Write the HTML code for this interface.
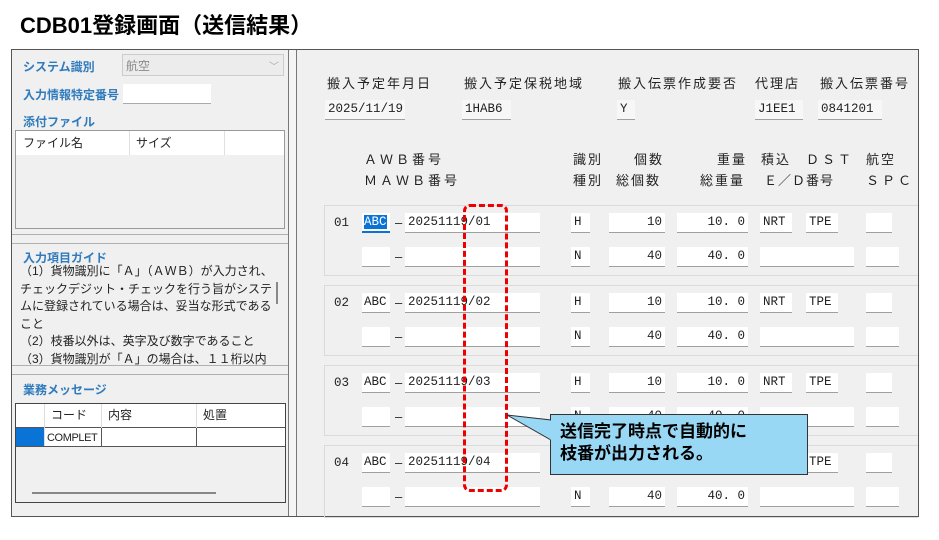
<!DOCTYPE html>
<html><head><meta charset="utf-8">
<style>
*{margin:0;padding:0;box-sizing:border-box}
body{width:939px;height:540px;background:#fff;position:relative;overflow:hidden;font-family:"Liberation Sans","Noto Sans CJK JP",sans-serif;color:#222}
.a{position:absolute}
.t{position:absolute;font-size:13px;white-space:nowrap;line-height:16px}
.h{letter-spacing:2px}
.lb{position:absolute;font-size:12px;font-weight:bold;color:#2f7bbd;white-space:nowrap}
.f{position:absolute;background:#fff;border-bottom:1px solid #a0a0a0;height:20px;font-family:"Liberation Mono","Noto Sans CJK JP",monospace;font-size:12.5px;line-height:19px;padding:0 3px;white-space:nowrap}
.r{text-align:right}
.g{position:absolute;left:324px;width:594px;height:71px;border:1px solid #dadada;border-right:none}
</style></head><body>
<div class="a" style="left:20px;top:10px;font-size:22px;font-weight:bold;color:#000;font-family:'Liberation Sans','Noto Sans CJK JP',sans-serif;line-height:32px">CDB01登録画面（送信結果）</div>

<!-- frame -->
<div class="a" style="left:11px;top:49px;width:908px;height:468px;background:#f0f0f0;border:1px solid #555"></div>
<div class="a" style="left:288px;top:50px;width:1px;height:466px;background:#777"></div>
<div class="a" style="left:296px;top:50px;width:1px;height:466px;background:#777"></div>
<div class="a" style="left:289px;top:50px;width:7px;height:466px;background:#f4f4f4"></div>

<!-- left section 1 -->
<div class="a" style="left:12px;top:50px;width:276px;height:185px;border-bottom:1px solid #b0b0b0"></div>
<div class="lb" style="left:23px;top:58px">システム識別</div>
<div class="a" style="left:122px;top:54px;width:162px;height:22px;border:1px solid #ccc;background:#ececec;font-size:12px;color:#888;padding:2px 3px">航空<span style="position:absolute;right:4px;top:3px;color:#aaa;font-size:10px">﹀</span></div>
<div class="lb" style="left:23px;top:86px">入力情報特定番号</div>
<div class="a" style="left:123px;top:84px;width:88px;height:20px;background:#fff;border-bottom:1px solid #aaa"></div>
<div class="lb" style="left:23px;top:113px">添付ファイル</div>
<div class="a" style="left:15px;top:130px;width:270px;height:99px;border:1px solid #999;background:#f0f0f0"></div>
<div class="a" style="left:16px;top:131px;width:268px;height:24px;background:#fff"></div>
<div class="a" style="left:129px;top:131px;width:1px;height:24px;background:#e0e0e0"></div>
<div class="a" style="left:224px;top:131px;width:1px;height:24px;background:#e0e0e0"></div>
<div class="t" style="left:23px;top:135px;font-size:12px">ファイル名</div>
<div class="t" style="left:136px;top:135px;font-size:12px">サイズ</div>

<!-- left section 2 -->
<div class="a" style="left:12px;top:243px;width:276px;height:123px;border-top:1px solid #b0b0b0;border-bottom:1px solid #b0b0b0;overflow:hidden">
<div class="lb" style="left:11px;top:5px">入力項目ガイド</div>
<div class="a" style="left:8px;top:19px;width:256px;font-size:12px;line-height:17.5px;color:#222;word-break:break-all">（1）貨物識別に「Ａ」（ＡＷＢ）が入力され、チェックデジット・チェックを行う旨がシステムに登録されている場合は、妥当な形式であること<br>（2）枝番以外は、英字及び数字であること<br>（3）貨物識別が「Ａ」の場合は、１１桁以内</div>
<div class="a" style="left:264px;top:38px;width:2px;height:22px;background:#888"></div>
</div>

<!-- left section 3 -->
<div class="a" style="left:12px;top:374px;width:276px;height:142px;border-top:1px solid #b0b0b0"></div>
<div class="lb" style="left:23px;top:381px">業務メッセージ</div>
<div class="a" style="left:15px;top:403px;width:271px;height:100px;border:1px solid #444;background:#f0f0f0"></div>
<div class="a" style="left:16px;top:404px;width:269px;height:43px;background:#fff"></div>
<div class="a" style="left:16px;top:427px;width:269px;height:1px;background:#555"></div>
<div class="a" style="left:16px;top:446px;width:269px;height:1px;background:#555"></div>
<div class="a" style="left:16px;top:428px;width:28px;height:18px;background:#0a74d6"></div>
<div class="a" style="left:44px;top:404px;width:1px;height:42px;background:#ddd"></div>
<div class="a" style="left:101px;top:404px;width:1px;height:42px;background:#ddd"></div>
<div class="a" style="left:101px;top:428px;width:1px;height:18px;background:#555"></div>
<div class="a" style="left:196px;top:404px;width:1px;height:42px;background:#ddd"></div>
<div class="a" style="left:196px;top:428px;width:1px;height:18px;background:#555"></div>
<div class="t" style="left:51px;top:407px;font-size:12px">コード</div>
<div class="t" style="left:108px;top:407px;font-size:12px">内容</div>
<div class="t" style="left:203px;top:407px;font-size:12px">処置</div>
<div class="t" style="left:47px;top:430px;font-size:11px;letter-spacing:-0.4px">COMPLET</div>
<div class="a" style="left:32px;top:492px;width:184px;height:2px;background:#888"></div>

<!-- right header -->
<div class="t h" style="left:327px;top:76px">搬入予定年月日</div>
<div class="t h" style="left:464px;top:76px">搬入予定保税地域</div>
<div class="t h" style="left:618px;top:76px">搬入伝票作成要否</div>
<div class="t h" style="left:755px;top:76px">代理店</div>
<div class="t h" style="left:820px;top:76px">搬入伝票番号</div>
<div class="f" style="left:325px;top:100px;width:80px;background:#f7f7f7">2025/11/19</div>
<div class="f" style="left:462px;top:100px;width:49px;background:#f7f7f7">1HAB6</div>
<div class="f" style="left:617px;top:100px;width:18px;background:#f7f7f7">Y</div>
<div class="f" style="left:755px;top:100px;width:48px;background:#f7f7f7">J1EE1</div>
<div class="f" style="left:818px;top:100px;width:64px;background:#f7f7f7">0841201</div>

<div class="t" style="left:364px;top:152px;letter-spacing:3px">ＡＷＢ番号</div>
<div class="t" style="left:364px;top:173px;letter-spacing:3px">ＭＡＷＢ番号</div>
<div class="t h" style="left:573px;top:152px">識別</div>
<div class="t h" style="left:573px;top:173px">種別</div>
<div class="t h" style="left:634px;top:152px">個数</div>
<div class="t h" style="left:616px;top:173px">総個数</div>
<div class="t h" style="left:717px;top:152px">重量</div>
<div class="t h" style="left:700px;top:173px">総重量</div>
<div class="t h" style="left:761px;top:152px">積込</div>
<div class="t" style="left:764px;top:173px;letter-spacing:1px">Ｅ／Ｄ番号</div>
<div class="t" style="left:806px;top:152px;letter-spacing:3px">ＤＳＴ</div>
<div class="t h" style="left:866px;top:152px">航空</div>
<div class="t" style="left:866px;top:173px;letter-spacing:3px">ＳＰＣ</div>

<!-- groups -->
<div class="g" style="top:205px"></div>
<div class="g" style="top:285px"></div>
<div class="g" style="top:365px"></div>
<div class="g" style="top:445px;height:73px"></div>

<div id="rows"></div>
<script>
var h='';
for(var i=0;i<4;i++){
 var y=213+i*80,y2=y+34,n='0'+(i+1);
 h+='<div class="t" style="left:334px;top:'+(y+2)+'px;font-family:Liberation Mono,monospace;font-size:12.5px">'+n+'</div>';
 if(i==0) h+='<div class="f" style="left:362px;top:'+y+'px;width:28px;padding:0 2px;border-bottom:2px solid #0a74d6"><span style="background:#0a74d6;color:#fff">ABC</span></div>';
 else h+='<div class="f" style="left:362px;top:'+y+'px;width:28px;padding:0 2px">ABC</div>';
 h+='<div class="t" style="left:395px;top:'+(y+2)+'px">–</div>';
 h+='<div class="f" style="left:405px;top:'+y+'px;width:135px">20251119/'+n+'</div>';
 h+='<div class="f" style="left:571px;top:'+y+'px;width:19px">H</div>';
 h+='<div class="f r" style="left:609px;top:'+y+'px;width:56px">10</div>';
 h+='<div class="f r" style="left:677px;top:'+y+'px;width:71px">10. 0</div>';
 h+='<div class="f" style="left:760px;top:'+y+'px;width:32px">NRT</div>';
 h+='<div class="f" style="left:806px;top:'+y+'px;width:32px">TPE</div>';
 h+='<div class="f" style="left:866px;top:'+y+'px;width:26px"></div>';
 h+='<div class="f" style="left:362px;top:'+y2+'px;width:28px"></div>';
 h+='<div class="t" style="left:395px;top:'+(y2+2)+'px">–</div>';
 h+='<div class="f" style="left:405px;top:'+y2+'px;width:135px"></div>';
 h+='<div class="f" style="left:571px;top:'+y2+'px;width:19px">N</div>';
 h+='<div class="f r" style="left:609px;top:'+y2+'px;width:56px">40</div>';
 h+='<div class="f r" style="left:677px;top:'+y2+'px;width:71px">40. 0</div>';
 h+='<div class="f" style="left:760px;top:'+y2+'px;width:94px"></div>';
 h+='<div class="f" style="left:866px;top:'+y2+'px;width:33px"></div>';
}
document.getElementById('rows').innerHTML=h;
</script>

<!-- red dashed -->
<div class="a" style="left:463px;top:204px;width:45px;height:288px;border:3px dashed #e00;border-radius:7px"></div>

<!-- callout -->
<svg class="a" style="left:0;top:0" width="939" height="540">
<polygon points="507,415 551,420 551,440" fill="#99d8f4" stroke="#333" stroke-width="1"/>
</svg>
<div class="a" style="left:550px;top:414px;width:258px;height:61px;background:#99d8f4;border:1.5px solid #333;font-size:17px;font-weight:bold;line-height:22px;padding:6px 0 0 9px;color:#000">送信完了時点で自動的に<br>枝番が出力される。</div>
<svg class="a" style="left:0;top:0" width="939" height="540"><line x1="551" y1="420.5" x2="551" y2="439.5" stroke="#99d8f4" stroke-width="2"/></svg>
</body></html>
